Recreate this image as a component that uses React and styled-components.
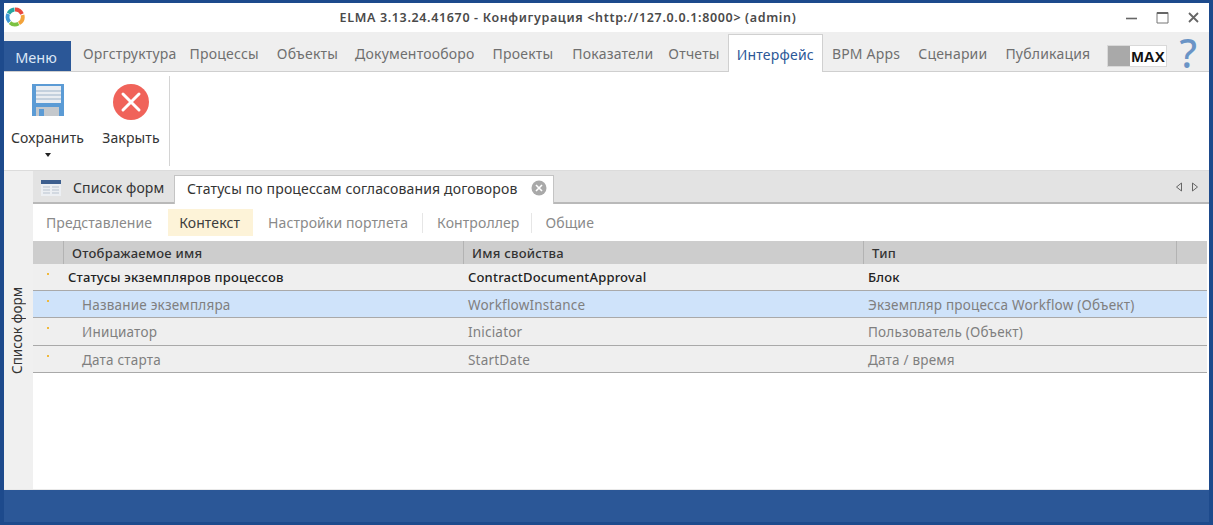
import React from "react";
import styled, { createGlobalStyle } from "styled-components";

const Global = createGlobalStyle`
  html, body { margin: 0; padding: 0; background: #2b5797; }
  body { font-family: "Noto Sans", "Open Sans", sans-serif; font-size: 13px; }
`;
const Frame = styled.div`
  width: 1213px; height: 525px; box-sizing: border-box; overflow: hidden;
  border: solid #1d4a8c; border-width: 3px 4px 3px 4px;
  display: flex; flex-direction: column; background: #fff;
`;
const TitleBar = styled.div`
  height: 29px; flex: none; display: flex; align-items: center; background: #fff;
`;
const Logo = styled.svg`width: 20px; height: 20px; margin: -2px 0 0 1px; flex: none;`;
const Title = styled.div`
  flex: 1; text-align: center; font-size: 12.5px; font-weight: 600; color: #4a4a4a; margin-top: -1px; padding-right: 14px; letter-spacing: .65px; white-space: nowrap;
`;
const WinBtns = styled.div`display: flex; align-items: center; gap: 18px; padding-right: 9px; margin-top: -1px;`;
const MenuBar = styled.div`
  height: 40px; flex: none; box-sizing: border-box; display: flex; align-items: flex-end;
  background: #efefef; border-bottom: 1px solid #cfcfcf;
`;
const MenuBtn = styled.div`
  width: 67px; height: 30px; box-sizing: border-box; background: #2b5797; color: #dbe6f5; font-size: 14.5px;
  display: flex; align-items: center; justify-content: center; flex: none; padding: 1px 3px 0 0;
`;
const Tabs = styled.div`display: flex; align-items: flex-end; height: 100%; margin-left: 12px;`;
const Tab = styled.div`
  height: 100%; box-sizing: border-box; font-size: 14px; letter-spacing: .2px; color: ${p => (p.$active ? "#2b5797" : "#6f6f6f")};
  display: flex; align-items: center; padding-top: 3px; margin-left: ${p => p.$ml || 0}px; white-space: nowrap;
  ${p => p.$active && "background:#fff;border:1px solid #d0d0d0;border-bottom:0;margin-bottom:-1px;height:calc(100% - 1px);padding:1px 8px 0 8px;"}
`;
const MaxBox = styled.div`
  position: absolute; right: 46px; top: 45px; width: 60px; height: 22px; display: flex; background: #fff; border: 1px solid #d9d9d9; box-sizing: border-box;
`;
const MaxGray = styled.div`width: 22px; background: #a9a9a9;`;
const MaxText = styled.div`flex: 1; font: 700 15px "Liberation Sans", sans-serif; color: #111; display:flex; align-items:center; justify-content:center;`;
const Help = styled.div`
  position: absolute; right: 16px; top: 31px; font: 500 39px/44px "Noto Sans", sans-serif; color: #6a94c6;
`;
const Ribbon = styled.div`height: 99px; flex: none; box-sizing: border-box; display: flex; background: #fff; border-bottom: 1px solid #dcdcdc;`;
const RibbonGroup = styled.div`display: flex; height: 90px; margin-top: 4px; border-right: 1px solid #d4d4d4;`;
const RibbonBtn = styled.div`
  display: flex; flex-direction: column; align-items: center; width: ${p => p.$w}px; margin-left: ${p => p.$ml || 0}px; font-size: 14px; letter-spacing: .15px; color: #333; padding-top: 8px; box-sizing: border-box;
`;
const SaveIcon = styled.svg`width: 32px; height: 32px; flex: none; margin-bottom: 4px;`;
const CloseIcon = styled.svg`width: 36px; height: 36px; flex: none;`;
const RibbonLabel = styled.div`margin-top: 9px; line-height: 18px;`;
const Caret = styled.div`width: 0; height: 0; border: solid transparent; border-width: 4px 3px 0 3px; border-top-color: #222; margin-top: 6px;`;
const Body = styled.div`flex: 1; display: flex; min-height: 0;`;
const Side = styled.div`
  width: 29px; flex: none; background: #f0f0f0; display: flex; align-items: center; flex-direction: column; padding: 116px 3px 0 0; box-sizing: border-box;
`;
const SideLabel = styled.div`writing-mode: vertical-rl; transform: rotate(180deg); font-size: 13.5px; color: #333; white-space: nowrap;`;
const Main = styled.div`flex: 1; display: flex; flex-direction: column; min-width: 0;`;
const Strip = styled.div`
  height: 33px; flex: none; box-sizing: border-box; background: #e3e3e3; border-bottom: 2px solid #b9b9b9; display: flex; align-items: flex-end;
`;
const ListTab = styled.div`
  display: flex; align-items: center; height: 31px; width: 141px; box-sizing: border-box; font-size: 14px; letter-spacing: .1px; color: #333; white-space: nowrap; padding: 2px 0 0 8px;
`;
const ActiveTab = styled.div`
  display: flex; align-items: center; height: 29px; margin-bottom: -2px; box-sizing: border-box; font-size: 14px; letter-spacing: .15px; color: #333; white-space: nowrap;
  background: #fff; border: 1px solid #c4c4c4; border-bottom: 0; padding: 0 6px 4px 12px;
`;
const CloseDot = styled.svg`width: 16px; height: 16px; margin-left: 14px;`;
const FormIcon = styled.svg`width: 20px; height: 16px; margin-right: 12px; flex: none;`;
const Arrows = styled.div`margin-left: auto; display: flex; gap: 8px; padding: 0 10px 10px 0;`;
const SubTabs = styled.div`height: 37px; flex: none; display: flex; align-items: center; padding-left: 1px;`;
const SubTab = styled.div`
  height: 27px; display: flex; align-items: center; font-size: 14px; letter-spacing: .1px; white-space: nowrap;
  padding: 0 ${p => p.$pr}px 0 ${p => p.$pl}px;
  color: ${p => (p.$active ? "#3c3c3c" : "#8a8a8a")};
  background: ${p => (p.$active ? "#fdf3d8" : "transparent")};
  margin-left: ${p => p.$ml || 0}px;
`;
const SubSep = styled.div`width: 1px; height: 20px; background: #e6e6e6; flex: none;`;
const Row = styled.div`
  display: grid; grid-template-columns: 430px 400px 1fr; height: ${p => p.$h}px; box-sizing: border-box;
  background: ${p => (p.$sel ? "#cfe3fa" : "#efefef")};
  border-bottom: 1px solid #a9a9a9; margin-right: 2px;
`;
const Head = styled.div`
  display: grid; grid-template-columns: 30px 400px 400px 313px 1fr; height: 23px; flex: none; background: #cdcdcd; margin-right: 2px;
`;
const HeadCell = styled.div`
  border-left: 1px solid #b3b3b3; padding-left: 8px; font-size: 13px; font-weight: 500; color: #333; display: flex; align-items: center; letter-spacing: .25px;
`;
const Cell = styled.div`
  display: flex; align-items: center; white-space: nowrap; position: relative;
  padding-left: ${p => p.$pl}px;
  padding-top: ${p => (p.$strong ? 0 : 1)}px;
  font-size: ${p => (p.$strong ? 13 : 13.5)}px;
  letter-spacing: .2px;
  color: ${p => (p.$strong ? "#222" : "#7f7f7f")};
  font-weight: ${p => (p.$strong ? 500 : 400)};
`;
const Dot = styled.span`
  position: absolute; left: 14px; top: 9px; width: 2px; height: 2px; background: #f0b93c;
`;
const Spacer = styled.div`flex: 1; background: #fff;`;
const Status = styled.div`height: 33px; flex: none; background: #2b5797; border-top: 1px solid #e9e9e9; box-sizing: border-box;`;

const rows = [
  ["Статусы экземпляров процессов", "ContractDocumentApproval", "Блок", 35, true, false, 27],
  ["Название экземпляра", "WorkflowInstance", "Экземпляр процесса Workflow (Объект)", 49, false, true, 27],
  ["Инициатор", "Iniciator", "Пользователь (Объект)", 49, false, false, 28],
  ["Дата старта", "StartDate", "Дата / время", 49, false, false, 27],
];

export default function App() {
  return (
    <>
      <Global />
      <Frame>
        <TitleBar>
          <Logo viewBox="0 0 20 20" fill="none" strokeWidth="3.8">
            <path d="M10 2.5A7.5 7.5 0 0 1 17 7" stroke="#e8483b" />
            <path d="M17.5 8A7.5 7.5 0 0 1 14 16.3" stroke="#f2a33a" />
            <path d="M13.5 16.6A7.5 7.5 0 0 1 5 15.6" stroke="#7cc242" />
            <path d="M4.5 15A7.5 7.5 0 0 1 3.2 7" stroke="#3f9ad6" />
            <path d="M3.5 6.5A7.5 7.5 0 0 1 9.5 2.5" stroke="#27a6a0" />
          </Logo>
          <Title>ELMA 3.13.24.41670 - Конфигурация &lt;http://127.0.0.1:8000&gt; (admin)</Title>
          <WinBtns>
            <svg width="13" height="13" viewBox="0 0 13 13"><path d="M1 7.5h11" stroke="#666" strokeWidth="1.6" /></svg>
            <svg width="13" height="13" viewBox="0 0 13 13" fill="none"><path d="M1 1.5h11v10.5H1z" stroke="#777" /><path d="M1 2h11" stroke="#666" strokeWidth="2" /></svg>
            <svg width="13" height="13" viewBox="0 0 13 13"><path d="M2 2l9 9M11 2l-9 9" stroke="#666" strokeWidth="1.8" /></svg>
          </WinBtns>
        </TitleBar>
        <MenuBar>
          <MenuBtn>Меню</MenuBtn>
          <Tabs>
            <Tab>Оргструктура</Tab>
            <Tab $ml={13}>Процессы</Tab>
            <Tab $ml={18}>Объекты</Tab>
            <Tab $ml={17}>Документооборо</Tab>
            <Tab $ml={18}>Проекты</Tab>
            <Tab $ml={19}>Показатели</Tab>
            <Tab $ml={15}>Отчеты</Tab>
            <Tab $ml={8} $active>Интерфейс</Tab>
            <Tab $ml={9}>BPM Apps</Tab>
            <Tab $ml={18}>Сценарии</Tab>
            <Tab $ml={18}>Публикация</Tab>
          </Tabs>
        </MenuBar>
        <MaxBox><MaxGray /><MaxText>MAX</MaxText></MaxBox>
        <Help>?</Help>
        <Ribbon>
          <RibbonGroup>
            <RibbonBtn $w={87}>
              <SaveIcon viewBox="0 0 32 32">
                <path d="M0 0h32v32H0z" fill="#5b9bd5" />
                <path d="M4 2h25v17H4z" fill="#e9edf2" />
                <path d="M4 7h25M4 11h25M4 15h25" stroke="#9db3c9" strokeWidth="1" />
                <path d="M4 23h23v9H4z" fill="#c4c8cc" />
                <path d="M7 25h5v7H7z" fill="#5b9bd5" />
              </SaveIcon>
              <RibbonLabel>Сохранить</RibbonLabel>
              <Caret />
            </RibbonBtn>
            <RibbonBtn $w={76} $ml={2}>
              <CloseIcon viewBox="0 0 36 36">
                <circle cx="18" cy="18" r="18" fill="#f0635a" />
                <path d="M10 10l16 16M26 10L10 26" stroke="#fff" strokeWidth="3" strokeLinecap="round" />
              </CloseIcon>
              <RibbonLabel>Закрыть</RibbonLabel>
            </RibbonBtn>
          </RibbonGroup>
        </Ribbon>
        <Body>
          <Side><SideLabel>Список форм</SideLabel></Side>
          <Main>
            <Strip>
              <ListTab>
                <FormIcon viewBox="0 0 20 16">
                  <path d="M0 0h20v16H0z" fill="#eceff3" />
                  <path d="M0 0h20v4H0z" fill="#3d5f8f" />
                  <path d="M2 7h7M11 7h7M2 10h7M11 10h7M2 13h7M11 13h7" stroke="#b9c3cf" />
                </FormIcon>
                Список форм
              </ListTab>
              <ActiveTab>
                Статусы по процессам согласования договоров
                <CloseDot viewBox="0 0 16 16">
                  <circle cx="8" cy="8" r="7.5" fill="#a9a9a9" />
                  <path d="M5 5l6 6M11 5l-6 6" stroke="#fff" strokeWidth="1.6" />
                </CloseDot>
              </ActiveTab>
              <Arrows>
                <svg width="8" height="10" viewBox="0 0 8 10" fill="none"><path d="M6.5 1L1.5 5l5 4z" stroke="#666" /></svg>
                <svg width="8" height="10" viewBox="0 0 8 10" fill="none"><path d="M1.5 1l5 4-5 4z" stroke="#666" /></svg>
              </Arrows>
            </Strip>
            <SubTabs>
              <SubTab $pl={12} $pr={12}>Представление</SubTab>
              <SubTab $active $pl={11} $pr={13} $ml={4}>Контекст</SubTab>
              <SubTab $pl={15} $pr={14}>Настройки портлета</SubTab>
              <SubSep />
              <SubTab $pl={14} $pr={12}>Контроллер</SubTab>
              <SubSep />
              <SubTab $pl={13} $pr={12}>Общие</SubTab>
            </SubTabs>
            <Head>
              <div />
              <HeadCell>Отображаемое имя</HeadCell>
              <HeadCell>Имя свойства</HeadCell>
              <HeadCell>Тип</HeadCell>
              <HeadCell />
            </Head>
            {rows.map(r => (
              <Row key={r[0]} $sel={r[5]} $h={r[6]}>
                <Cell $pl={r[3]} $strong={r[4]}><Dot />{r[0]}</Cell>
                <Cell $pl={5} $strong={r[4]}>{r[1]}</Cell>
                <Cell $pl={5} $strong={r[4]}>{r[2]}</Cell>
              </Row>
            ))}
            <Spacer />
          </Main>
        </Body>
        <Status />
      </Frame>
    </>
  );
}
